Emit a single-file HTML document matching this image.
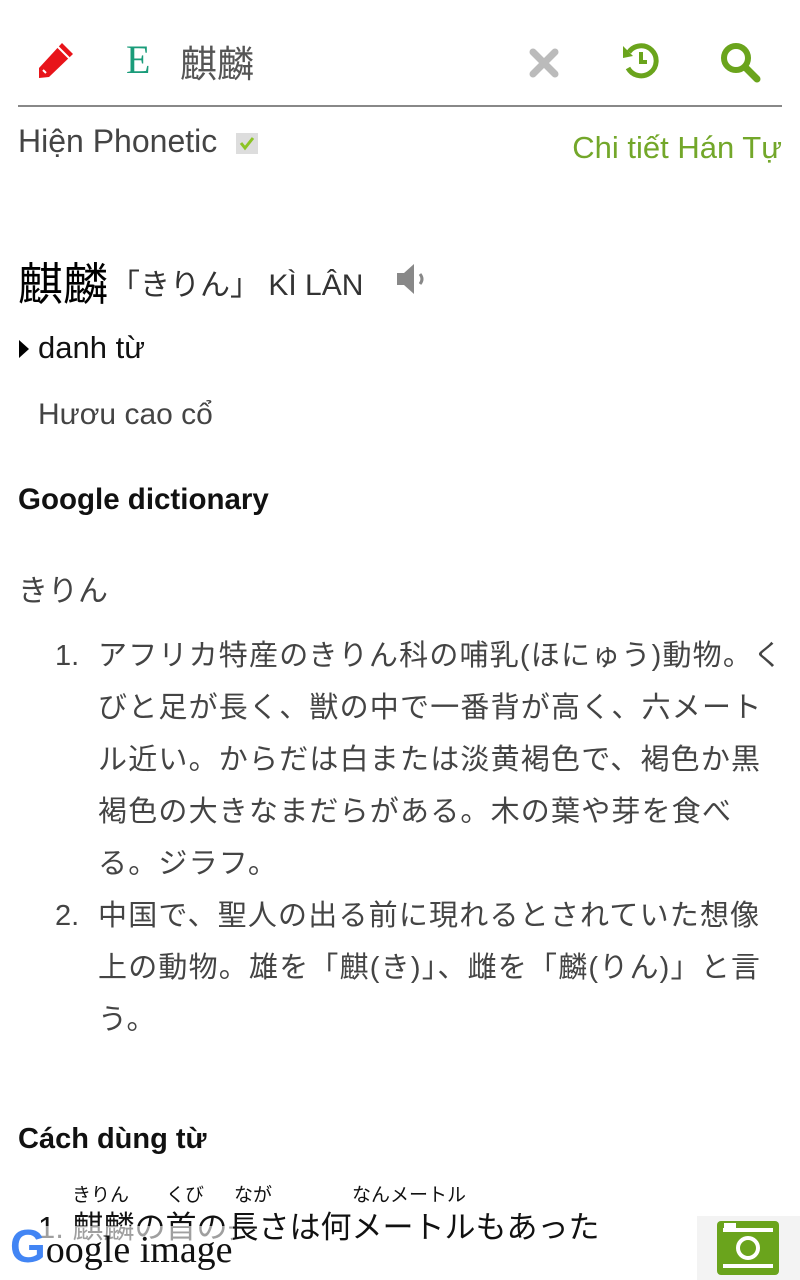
<!DOCTYPE html>
<html><head><meta charset="utf-8"><style>
body{margin:0;width:800px;height:1280px;overflow:hidden;background:#fff;font-family:"Liberation Sans","Noto Sans CJK JP",sans-serif;position:relative}
.a{position:absolute;white-space:nowrap}
.jp{font-family:"Liberation Sans","Noto Sans CJK JP",sans-serif}
</style></head><body>
<!-- header -->
<svg class="a" style="left:36px;top:40px" width="40" height="40" viewBox="0 0 40 40"><path d="M26 3 L37 14 L13 37 L3 38 L3 28 Z" fill="#e8141a"/><path d="M7 30 L10 33" stroke="#fff" stroke-width="2"/><path d="M22 7 L33 18" stroke="#fff" stroke-width="2"/></svg>
<div class="a" style="left:126px;top:36px;font-family:'Liberation Serif',serif;font-size:40px;color:#1a9c7a">E</div>
<div class="a jp" style="left:180px;top:34px;font-size:37px;color:#555">麒麟</div>
<svg class="a" style="left:529px;top:48px" width="30" height="30" viewBox="0 0 30 30"><path d="M4 4 L26 26 M26 4 L4 26" stroke="#bbb" stroke-width="7" stroke-linecap="round"/></svg>
<svg class="a" style="left:620px;top:40px" width="42" height="42" viewBox="0 0 42 42"><path d="M9 12 A15 15 0 1 1 8 28" fill="none" stroke="#6aa41c" stroke-width="5"/><path d="M3 6 L13 16 L3 18 Z" fill="#6aa41c"/><path d="M21 12 V22 H27" fill="none" stroke="#6aa41c" stroke-width="4"/></svg>
<svg class="a" style="left:718px;top:40px" width="46" height="44" viewBox="0 0 46 44"><circle cx="18" cy="18" r="12" fill="none" stroke="#6aa41c" stroke-width="6"/><path d="M27 27 L39 39" stroke="#6aa41c" stroke-width="7" stroke-linecap="round"/></svg>
<div class="a" style="left:18px;top:105px;width:764px;height:2px;background:#888"></div>
<div class="a" style="left:18px;top:123px;font-size:32px;color:#444">Hiện Phonetic</div>
<div class="a" style="left:236px;top:133px;width:22px;height:21px;background:#ddd"></div>
<svg class="a" style="left:236px;top:133px" width="22" height="21"><path d="M5 10 L9 15 L17 5" fill="none" stroke="#8cc425" stroke-width="3"/></svg>
<div class="a" style="right:18px;top:130px;font-size:31px;color:#73a72a">Chi tiết Hán Tự</div>
<!-- word -->
<div class="a jp" style="left:18px;top:248px;font-size:45px;color:#000">麒麟</div>
<div class="a jp" style="left:110px;top:260px;font-size:30px;color:#333">「きりん」 KÌ LÂN</div>
<svg class="a" style="left:395px;top:262px" width="34" height="34" viewBox="0 0 34 34"><path d="M2 11 H9 L19 2 V32 L9 23 H2 Z" fill="#888"/><path d="M25 12 Q29 17 25 22" fill="none" stroke="#888" stroke-width="3"/></svg>
<svg class="a" style="left:18px;top:339px" width="12" height="20"><path d="M1 1 L11 10 L1 19 Z" fill="#000"/></svg>
<div class="a" style="left:38px;top:330px;font-size:31px;color:#111">danh từ</div>
<div class="a" style="left:38px;top:398px;font-size:30px;color:#444">Hươu cao cổ</div>
<div class="a" style="left:18px;top:483px;font-size:29.5px;font-weight:bold;color:#111">Google dictionary</div>
<div class="a jp" style="left:18px;top:566px;font-size:30px;color:#444">きりん</div>
<div class="a jp" style="left:55px;top:630px;font-size:29px;color:#444;line-height:52px;letter-spacing:1.2px">
<div style="position:relative;padding-left:43px"><span style="position:absolute;left:0;letter-spacing:0">1.</span>アフリカ特産のきりん科の哺乳(ほにゅう)動物。く<br>びと足が長く、獣の中で一番背が高く、六メート<br>ル近い。からだは白または淡黄褐色で、褐色か黒<br>褐色の大きなまだらがある。木の葉や芽を食べ<br>る。ジラフ。</div>
<div style="position:relative;padding-left:43px"><span style="position:absolute;left:0;letter-spacing:0">2.</span>中国で、聖人の出る前に現れるとされていた想像<br>上の動物。雄を「麒(き)」、雌を「麟(りん)」と言<br>う。</div>
</div>
<div class="a" style="left:18px;top:1123px;font-size:29px;font-weight:bold;color:#111">Cách dùng từ</div>
<div class="a jp" style="left:72px;top:1180px;font-size:19px;color:#111">きりん</div>
<div class="a jp" style="left:166px;top:1180px;font-size:19px;color:#111">くび</div>
<div class="a jp" style="left:234px;top:1180px;font-size:19px;color:#111">なが</div>
<div class="a jp" style="left:352px;top:1180px;font-size:19px;color:#111">なんメートル</div>
<div class="a jp" style="left:38px;top:1202px;font-size:31px;color:#111">1. 麒麟の首の長さは何メートルもあった</div>
<div class="a" style="left:10px;top:1226px;font-family:'Liberation Serif',serif;font-size:38px;color:#111;background:rgba(255,255,255,0.6)"><span style="color:#4285f4;font-family:'Liberation Sans',sans-serif;font-weight:bold;font-size:46px;line-height:40px">G</span>oogle image</div>
<div class="a" style="left:697px;top:1216px;width:103px;height:64px;background:#f3f3f3"></div>
<svg class="a" style="left:716px;top:1220px" width="64" height="56" viewBox="0 0 64 56"><rect x="1" y="1" width="62" height="54" rx="4" fill="#6aa41c"/><rect x="7" y="8" width="50" height="4" fill="#fff"/><rect x="7" y="44" width="50" height="4" fill="#fff"/><rect x="8" y="3" width="12" height="5" fill="#fff"/><circle cx="32" cy="28" r="10" fill="none" stroke="#fff" stroke-width="4"/></svg>
</body></html>
